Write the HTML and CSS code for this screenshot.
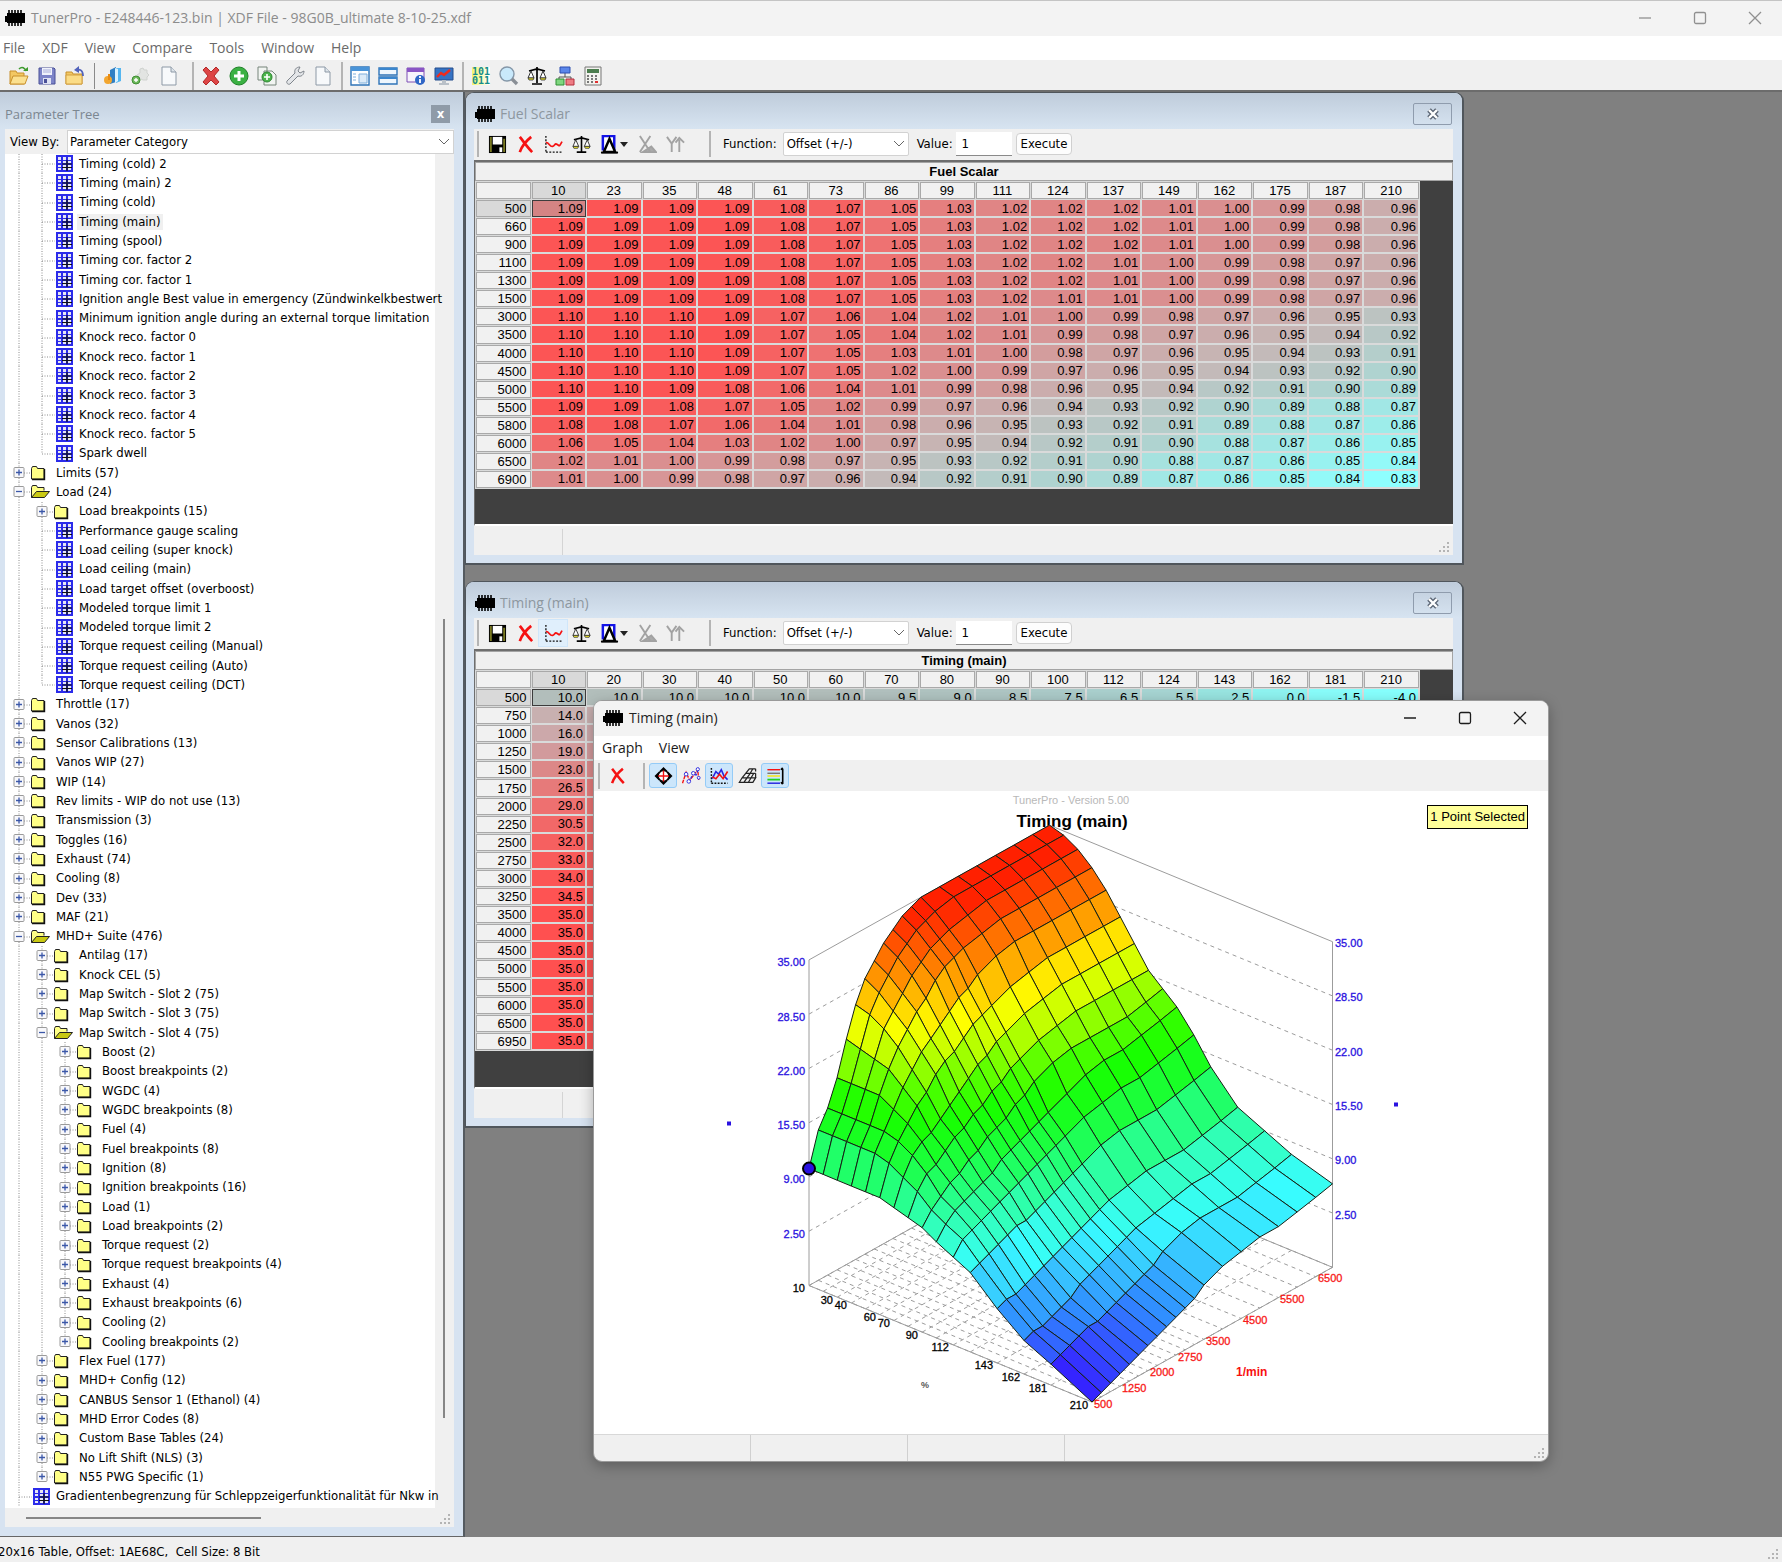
FILE: index.html
```html
<!DOCTYPE html>
<html lang="en">
<head>
<meta charset="utf-8">
<title>TunerPro</title>
<link rel="stylesheet" href="styles.css">
</head>
<body>
<svg class="defs" aria-hidden="true">
  <symbol id="chip" viewBox="0 0 20 16"><path d="M2 3h18v10H2zM0 6h2v6H0z" fill="#000"/><path d="M4 0v3M7 0v3M10 0v3M13 0v3M16 0v3M4 13v3M7 13v3M10 13v3M13 13v3M16 13v3" stroke="#000" stroke-width="1.6"/></symbol>
  <symbol id="open" viewBox="0 0 20 20"><path d="M1 18V5h6l1 2h7v11z" fill="#f3c863" stroke="#c8902c"/><path d="M1 18l3-8h15l-3 8z" fill="#fbe08f" stroke="#c8902c"/><path d="M10 3c3-3 6-1 7 2" fill="none" stroke="#3c9a2c" stroke-width="1.6"/><path d="M14 5h5V1z" fill="#3c9a2c"/></symbol>
  <symbol id="save" viewBox="0 0 20 20"><path d="M2 2h15l1 1v15H2z" fill="#7d84c8" stroke="#4a5097"/><path d="M5 2h10v7H5z" fill="#f0f2fb"/><path d="M6 4h8M6 6h8" stroke="#a9aed8"/><path d="M6 12h8v6H6z" fill="#dfe2f2"/><path d="M7 13h3v4H7z" fill="#4a5097"/></symbol>
  <symbol id="openback" viewBox="0 0 20 20"><path d="M1 18V6h6l1 2h9v10z" fill="#f3c863" stroke="#c8902c"/><path d="M1 18V9h16v9z" fill="#fbdc86" stroke="#d3a040"/><path d="M11 4c4-1 7 0 7 6" fill="none" stroke="#5263bb" stroke-width="1.8"/><path d="M9 4l5-4v7z" fill="#5263bb"/></symbol>
  <symbol id="cyl" viewBox="0 0 20 20"><path d="M7 4l6-3v15l-6 2z" fill="#2f7fc4"/><path d="M13 2h5v13l-5 2z" fill="#55b6f0"/><path d="M12 2l3 1v12l-3 2z" fill="#d9f2ff"/><circle cx="5" cy="14" r="4" fill="#f2a630"/><path d="M6 8v6" stroke="#e88a10" stroke-width="2"/></symbol>
  <symbol id="gearadd" viewBox="0 0 20 20"><path d="M9 3l3-1 1 2 3 0 0 3 2 2-2 2 0 3-4 0-4-2-2-3 3-2z" fill="#e2e4e2" stroke="#cfd2cf"/><circle cx="5" cy="14" r="4" fill="#6fb95d" stroke="#3f8f34"/><path d="M5 12v4M3 14h4" stroke="#fff" stroke-width="1.4"/></symbol>
  <symbol id="page" viewBox="0 0 20 20"><path d="M3 1h9l5 5v13H3z" fill="#f7f9fb" stroke="#8d99a6"/><path d="M12 1v5h5" fill="#dde4ea" stroke="#8d99a6"/></symbol>
  <symbol id="cross" viewBox="0 0 20 20"><path d="M2 4l3-3 5 5 5-5 3 3-5 6 5 6-3 3-5-5-5 5-3-3 5-6z" fill="#dd4545" stroke="#b22a2a"/></symbol>
  <symbol id="add" viewBox="0 0 20 20"><circle cx="10" cy="10" r="9" fill="#3bb143" stroke="#1f8128"/><path d="M10 5v10M5 10h10" stroke="#fff" stroke-width="3"/></symbol>
  <symbol id="copyadd" viewBox="0 0 20 20"><path d="M1 1h9v13H1zM7 5h8l4 4v10H7z" fill="#f2f5f2" stroke="#77857a"/><circle cx="10" cy="11" r="5" fill="#4db54c" stroke="#2c8530"/><path d="M10 8v6M7 11h6" stroke="#fff" stroke-width="1.6"/></symbol>
  <symbol id="wrench" viewBox="0 0 20 20"><path d="M2 15l8-8c-1-3 1-6 5-6l-2 4 2 2 4-2c0 4-3 6-6 5l-8 8c-2 1-4-1-3-3z" fill="#e3e5e8" stroke="#7f858c"/></symbol>
  <symbol id="win1" viewBox="0 0 20 20"><path d="M1 1h18v18H1z" fill="#fff" stroke="#2f74b8" stroke-width="1.4"/><path d="M1 1h18v4H1z" fill="#4a94d8"/><path d="M3 8h3M3 11h3M3 14h3M9 8h8v9H9z" fill="#dcebf8" stroke="#7faedb"/></symbol>
  <symbol id="win2" viewBox="0 0 20 20"><path d="M1 2h18v7H1zM1 11h18v7H1z" fill="#eef6fd" stroke="#2f74b8" stroke-width="1.4"/><path d="M1 2h18v2H1zM1 11h18v2H1z" fill="#3a86ce"/></symbol>
  <symbol id="wininfo" viewBox="0 0 20 20"><path d="M1 2h17v14H1z" fill="#f7f3fc" stroke="#7c4fb5"/><path d="M1 2h17v4H1z" fill="#8a55c5"/><circle cx="14" cy="14" r="5" fill="#2f66c6"/><path d="M14 13v4M14 10v2" stroke="#fff" stroke-width="1.8"/></symbol>
  <symbol id="monitor" viewBox="0 0 20 20"><path d="M1 2h18v12H1z" fill="#3673c4" stroke="#274f8c"/><path d="M3 11l4-4 3 2 6-5" fill="none" stroke="#f02a1c" stroke-width="2.4"/><path d="M8 14h4v3h3v2H5v-2h3z" fill="#b9c0c8"/></symbol>
  <symbol id="lens" viewBox="0 0 20 20"><circle cx="8" cy="8" r="7" fill="#c9e9fb" stroke="#8597a8" stroke-width="1.4"/><path d="M13 13l5 5" stroke="#8a8f96" stroke-width="3.4"/></symbol>
  <symbol id="scale" viewBox="0 0 20 20"><path d="M10 1v16M5 18h10M2 5l8-2 8 2" fill="none" stroke="#000" stroke-width="1.7"/><path d="M4 5L1 12h6zM16 5l-3 7h6z" fill="#fff" stroke="#333"/><path d="M1 12h6l-1 2H2zM13 12h6l-1 2h-4z" fill="#f2ea2c" stroke="#333" stroke-width=".8"/></symbol>
  <symbol id="nodes" viewBox="0 0 20 20"><path d="M10 7v4M4 14v-3h12v3" fill="none" stroke="#555"/><path d="M5 1h10v6H5z" fill="#5a86ea" stroke="#2c4fb0"/><path d="M1 13h8v6H1z" fill="#7fd67f" stroke="#2f8f35"/><path d="M11 13h8v6h-8z" fill="#ee7c84" stroke="#b32f3c"/></symbol>
  <symbol id="calc" viewBox="0 0 20 20"><path d="M2 1h16v18H2z" fill="#f2f2ee" stroke="#777"/><path d="M4 3h12v4H4z" fill="#4c7d4e"/><path d="M4 10h2M8 10h2M12 10h2M4 13h2M8 13h2M12 13h2M4 16h2M8 16h2" stroke="#777" stroke-width="1.8"/><path d="M12 16h3" stroke="#e03030" stroke-width="2"/></symbol>
  <symbol id="disk" viewBox="0 0 20 20"><path d="M1 1h18v18H1z" fill="#000"/><path d="M3 2v16M17 4v14" stroke="#7a7a22" stroke-width="2"/><path d="M5 2h10v8H5z" fill="#fff"/><path d="M12 13h3v5h-3z" fill="#fff"/></symbol>
  <symbol id="redx" viewBox="0 0 20 20"><path d="M4 2c4 5 8 11 13 16M16 2C11 6 6 12 4 18" fill="none" stroke="#f51212" stroke-width="2.8"/></symbol>
  <symbol id="curve" viewBox="0 0 20 20"><path d="M2 1v18M2 18h17" stroke="#111" stroke-width="1.4" stroke-dasharray="2 1.6"/><path d="M2 8c3-1 4 5 7 4s2-4 5-2 2 2 5-3" fill="none" stroke="#f51212" stroke-width="1.8"/></symbol>
  <symbol id="delta" viewBox="0 0 20 20"><path d="M3 1h12v14H3z" fill="#fff" stroke="#1414e6" stroke-width="2.6"/><path d="M10 4L4 18h12z" fill="#fff" stroke="#000" stroke-width="2.6"/><path d="M1 18.500h18" stroke="#000" stroke-width="2"/></symbol>
  <symbol id="xaxis" viewBox="0 0 20 20"><path d="M2 1l11 17M13 1L2 18M5 18h14l-5-6z" fill="#aaa" stroke="#a2a2a2" stroke-width="2"/></symbol>
  <symbol id="yaxis" viewBox="0 0 20 20"><path d="M1 2l5 7 5-7M6 9v9M14 5v13M10 8l4-5 5 5" fill="none" stroke="#a2a2a2" stroke-width="2"/></symbol>
  <symbol id="pan" viewBox="0 0 20 20"><path d="M10 0l5 5H5zM10 20l-5-5h10zM0 10l5-5v10zM20 10l-5 5V5z"/><circle cx="10" cy="10" r="6" fill="#fff" stroke="#000" stroke-width="1.6"/><path d="M10 4v12M4 10h12" stroke="#f51212" stroke-width="1.5"/></symbol>
  <symbol id="pts" viewBox="0 0 20 20"><path d="M0 18L4 6l4 9 9-12 1 12" fill="none" stroke="#f51212" stroke-width="1.5" stroke-dasharray="4 1"/><path d="M7 17l5-10 3 2 3-7" fill="none" stroke="#2424e0" stroke-width="1.3" stroke-dasharray="3 1.500"/><g fill="#fff" stroke="#2424e0"><circle cx="4" cy="8" r="2"/><circle cx="7" cy="16" r="2"/><circle cx="12" cy="7" r="2"/><circle cx="17" cy="2.500" r="1.8"/><circle cx="18" cy="12" r="1.6"/></g></symbol>
  <symbol id="twoc" viewBox="0 0 20 20"><path d="M1 1v18M1 18h18" stroke="#111" stroke-width="1.6" stroke-dasharray="2 1.5"/><path d="M2 13l4-8 3 3 3-5 3 7 4 4" fill="none" stroke="#2424e0" stroke-width="1.8"/><path d="M2 11l4 2 4-5 4 5 5-8" fill="none" stroke="#f51212" stroke-width="1.8"/></symbol>
  <symbol id="mesh" viewBox="0 0 20 20"><path d="M1 17h15l3-5H4zM4 12l4-5h11M6 17l7-10M11 17l6-10M8 7l4-5h7M16 2l-3 5M19 2v3M19 7v5" fill="none" stroke="#222" stroke-width="1.4"/></symbol>
  <symbol id="bars" viewBox="0 0 20 20"><path d="M1 3h14" stroke="#f51212" stroke-width="1.6"/><path d="M1 7h14" stroke="#777" stroke-width="1.6"/><path d="M1 10h14" stroke="#f1e63a" stroke-width="2"/><path d="M1 14h14" stroke="#21d321" stroke-width="2"/><path d="M1 18h14" stroke="#2424e0" stroke-width="1.6"/><path d="M18 2v17M16 3l2-2M16 17l2 2" stroke="#000" stroke-width="1.8"/></symbol>
</svg>

<div class="app">
  <header class="titlebar">
    <svg class="chip"><use href="#chip"/></svg>
    <h1 class="caption">TunerPro - E248446-123.bin | XDF File - 98G0B_ultimate 8-10-25.xdf</h1>
    <div class="winbtns dim">
      <button aria-label="Minimize"><svg viewBox="0 0 14 14"><path d="M1 7h12"/></svg></button>
      <button aria-label="Maximize"><svg viewBox="0 0 14 14"><rect x="1.5" y="1.5" width="11" height="11" rx="1.5"/></svg></button>
      <button aria-label="Close"><svg viewBox="0 0 14 14"><path d="M1 1l12 12M13 1L1 13"/></svg></button>
    </div>
  </header>
  <nav class="menu dimtext"><a href="#">File</a><a href="#">XDF</a><a href="#">View</a><a href="#">Compare</a><a href="#">Tools</a><a href="#">Window</a><a href="#">Help</a></nav>
  <div class="toolbar" id="maintools"></div>

  <div class="work">
    <aside class="panel">
      <div class="paneltitle"><h2>Parameter Tree</h2><button class="pclose" aria-label="Close">x</button></div>
      <div class="panelbody">
        <div class="viewby"><label for="vb">View By:</label><select id="vb"><option>Parameter Category</option></select></div>
        <div class="treebox">
          <ul class="tree" id="tree"></ul>
          <div class="vscroll"><i></i></div>
        </div>
        <div class="hscroll"><i></i><svg class="grip"><use href="#gripdots"/></svg></div>
      </div>
    </aside>

    <main class="mdi">
      <section class="win fuel" data-title="Fuel Scalar" data-table="fuel"></section>
      <section class="win timing" data-title="Timing (main)" data-table="timing"></section>

      <section class="graph">
        <div class="gtitle">
          <svg class="chip"><use href="#chip"/></svg><h2>Timing (main)</h2>
          <div class="winbtns">
            <button aria-label="Minimize"><svg viewBox="0 0 14 14"><path d="M1 7h12"/></svg></button>
            <button aria-label="Maximize"><svg viewBox="0 0 14 14"><rect x="1.5" y="1.5" width="11" height="11" rx="1.5"/></svg></button>
            <button aria-label="Close"><svg viewBox="0 0 14 14"><path d="M1 1l12 12M13 1L1 13"/></svg></button>
          </div>
        </div>
        <nav class="menu"><a href="#">Graph</a><a href="#">View</a></nav>
        <div class="gtools">
          <span class="sep"></span><button aria-label="Close graph"><svg><use href="#redx"/></svg></button>
          <span class="sep wide"></span>
          <button class="on" aria-label="Pan"><svg><use href="#pan"/></svg></button>
          <button aria-label="Points"><svg><use href="#pts"/></svg></button>
          <button class="on" aria-label="Curves"><svg><use href="#twoc"/></svg></button>
          <button aria-label="Mesh"><svg><use href="#mesh"/></svg></button>
          <button class="on" aria-label="Legend"><svg><use href="#bars"/></svg></button>
        </div>
        <div class="plot"><svg id="chart" viewBox="0 0 954 642" role="img" aria-label="Timing (main) surface"></svg><span class="note">1 Point Selected</span></div>
        <div class="gstatus"><span></span><span></span><span></span><span></span><svg class="grip"><use href="#gripdots"/></svg></div>
      </section>
    </main>
  </div>
  <footer class="status"><span>20x16 Table, Offset: 1AE68C,&nbsp; Cell Size: 8 Bit</span><svg class="grip"><use href="#gripdots"/></svg></footer>
</div>
<svg class="defs" aria-hidden="true"><symbol id="gripdots" viewBox="0 0 12 12"><path d="M8 0h2v2H8zM8 4h2v2H8zM8 8h2v2H8zM4 4h2v2H4zM4 8h2v2H4zM0 8h2v2H0z" fill="#b4b4b4"/></symbol></svg>
<script src="app.js"></script>
</body>
</html>
```

FILE: styles.css
```css
* { box-sizing: border-box; }
body { margin: 0; font: 13px/16px "DejaVu Sans Condensed", "DejaVu Sans", sans-serif; color: #000; background: #f0f0f0; }
h1, h2 { margin: 0; font-weight: 400; }
button { border: 0; background: none; padding: 0; font: inherit; color: inherit; }
.defs { position: absolute; width: 0; height: 0; }
.app { display: flex; flex-direction: column; height: 100vh; overflow: hidden; }

.titlebar { display: flex; align-items: center; height: 36px; padding: 0 0 2px 5px; background: #f3f3f3; border-top: 1px solid #c4c4c4; flex: none; }
.chip { width: 20px; height: 16px; flex: none; }
.caption, .gtitle h2, .wtitle h2 { font: 14px/18px "Open Sans", sans-serif; }
.paneltitle h2 { font: 13px/18px "Open Sans", sans-serif; }
.caption { color: #8c8c8c; margin-left: 6px; }
.winbtns { margin-left: auto; display: flex; }
.winbtns button { width: 55px; height: 30px; display: flex; align-items: center; justify-content: center; }
.winbtns svg { width: 14px; height: 14px; fill: none; stroke: #1c1c1c; stroke-width: 1.3; }
.winbtns.dim svg { stroke: #909090; }
.menu { display: flex; align-items: center; height: 22px; background: #fff; font: 14px/20px "Open Sans", sans-serif; flex: none; }
.menu a { color: #1a1a1a; text-decoration: none; }
.dimtext { padding-left: 3px; gap: 17px; height: 24px; }
.dimtext a { color: #6a6a6a; }
.toolbar { display: flex; align-items: center; height: 32px; padding-top: 2px; background: #f0f0f0; border-bottom: 2px solid #6c6c6c; flex: none; }
.toolbar button { width: 28px; height: 28px; display: flex; align-items: center; justify-content: center; }
.toolbar svg { width: 20px; height: 20px; }
.toolbar .lead { width: 5px; }
.toolbar .line { width: 1px; height: 26px; margin: 0 4px 0 5px; background: #8a8a8a; }
.toolbar .bar { width: 2px; height: 28px; margin: 0 3px 0 4px; background: #b4b4b4; }
.toolbar .gap { margin-left: 9px; }
.bits { font: bold 10px/9px "DejaVu Sans Mono", monospace; color: #148c8c; background: linear-gradient(90deg, #f4f46a, #fff); }
.bits b { display: block; }

.work { flex: 1; display: flex; min-height: 0; background: #808080; }
.panel { width: 465px; flex: none; display: flex; flex-direction: column; padding: 0 9px 9px 5px; background: #d7e3f1; border-right: 2px solid #555b61; border-bottom: 1px solid #666; }
.paneltitle { display: flex; align-items: center; height: 37px; margin: 0 -9px 0 -5px; padding: 8px 13px 1px 5px; background: linear-gradient(#bfccdb, #d7e4f1); color: #7c8791; flex: none; }
.pclose { margin-left: auto; width: 19px; height: 18px; background: #8f9ba8; color: #fff; font-weight: 700; line-height: 14px; }
.panelbody { flex: 1; display: flex; flex-direction: column; background: #f0f0f0; min-height: 0; }
.viewby { display: flex; align-items: center; height: 25px; flex: none; padding-left: 5px; }
.viewby label { width: 57px; }
select { appearance: none; border: 1px solid #d2d2d2; font: inherit; color: #000; background: #fff url("data:image/svg+xml,%3Csvg xmlns='http://www.w3.org/2000/svg' width='10' height='6'%3E%3Cpath d='M0 0l5 5 5-5' fill='none' stroke='%23666'/%3E%3C/svg%3E") no-repeat right 4px center; }
.viewby select { flex: 1; height: 24px; padding: 0 2px; }
.treebox { display: flex; flex: 1; min-height: 0; }
.tree { flex: 1; min-width: 0; margin: 0; padding: 0 0 2px; list-style: none; background: #fff; display: flex; flex-direction: column; }
.tree li { flex: 1; display: flex; align-items: center; min-height: 0; white-space: nowrap; }
.tree svg { height: 100%; flex: none; }
.tree .sel { background: #f0f0f0; padding: 0 2px; margin-left: -2px; }
.vscroll { width: 19px; padding: 465px 0 90px 8px; }
.vscroll i { display: block; width: 2px; height: 100%; background: #868686; }
.hscroll { height: 19px; flex: none; display: flex; align-items: center; padding-left: 21px; }
.hscroll i { width: 235px; height: 2px; background: #868686; }
.grip { width: 12px; height: 12px; margin: auto 2px 1px auto; }

.mdi { flex: 1; position: relative; overflow: hidden; }
.win { position: absolute; left: 0; width: 999px; display: flex; flex-direction: column; padding: 0 9px 8px 8px; background: #d7e3f1; border: 1px solid #50565c; border-radius: 9px 9px 0 0; border-width: 1px 2px 2px 1px; }
.fuel { top: 0; height: 473px; }
.timing { top: 489px; height: 547px; }
.wtitle { display: flex; align-items: center; height: 36px; flex: none; margin: 0 -9px 0 -8px; padding: 5px 10px 0 9px; border-radius: 8px 8px 0 0; background: linear-gradient(#bfccdb, #d7e4f1); color: #8d979f; }
.wtitle h2 { margin-left: 5px; }
.wclose { margin-left: auto; width: 39px; height: 22px; border: 1px solid #8f9cad; border-radius: 2px; color: #fff; display: flex; align-items: center; justify-content: center; }
.wclose svg { width: 14px; height: 12px; }
.wtools { display: flex; align-items: center; height: 31px; flex: none; background: #f0f0f0; padding: 0 0 1px 3px; }
.wtools button.ic { width: 28px; height: 26px; display: flex; align-items: center; justify-content: center; }
.wtools button.ic svg { width: 19px; height: 19px; }
.wtools button.on { background: #e0effc; outline: 1px solid #cfe6fa; }
.wtools .sep { width: 2px; height: 26px; margin-right: 4px; background: #b4b4b4; }
.wtools .drop { border: 4px solid transparent; border-top: 5px solid #222; margin: 4px 5px 0 -3px; }
.wtools .far { margin: 0 12px 0 20px; }
.wtools label { white-space: nowrap; }
.wtools select { width: 126px; height: 24px; margin: 0 8px 0 6px; padding: 0 3px; border-radius: 2px; }
.wtools input { width: 56px; height: 24px; margin: 0 4px 0 3px; border: 0; border-bottom: 1px solid #8a8a8a; padding: 0 6px; font: inherit; background: #fff; }
.exec { height: 22px; padding: 0 4px; border: 1px solid #d0d0d0; border-radius: 4px; background: #fdfdfd; }
.sheet { flex: 1; min-height: 0; background: #404040; border-top: 2px solid #6e6e6e; border-left: 1px solid #6e6e6e; border-bottom: 2px solid #fff; font: 13px/16px "Liberation Sans", Arial, sans-serif; overflow: hidden; }
.sname { height: 19px; margin: 0; border: 1px solid #a4a4a4; background: #f0f0f0; text-align: center; font-weight: 700; line-height: 18px; overflow: hidden; }
.grid { width: 945px; table-layout: fixed; border-collapse: separate; border-spacing: 1px; background: #d9dada; }
.fuel .grid { height: 308px; }
.timing .grid { height: 381px; }
.grid th, .grid td { padding: 0 2px; text-align: right; line-height: 15px; font-weight: 400; border: 0 solid #d9dada; border-width: 0 1px 1px 0; }
.grid th { background: #f1f1f1; border: 1px solid #a9a9a9; padding-right: 3px; }
.grid thead th { height: 17px; text-align: center; }
.grid th.cur { background: #d9d9d9; }
.grid td.cur { outline: 1px solid #3c3c3c; outline-offset: -1px; }
.wstatus { height: 29px; flex: none; background: #f0f0f0; display: flex; padding-top: 3px; }
.wstatus span { width: 89px; border-right: 1px solid #d4d4d4; }

.graph { position: absolute; left: 128px; top: 608px; width: 956px; height: 762px; display: flex; flex-direction: column; background: #f0f0f0; border: 1px solid #9a9a9a; border-radius: 9px; overflow: hidden; box-shadow: 0 4px 14px rgba(0, 0, 0, .28); }
.gtitle { display: flex; align-items: center; height: 35px; flex: none; padding: 0 1px 2px 9px; background: #f3f3f3; color: #222; }
.gtitle h2 { margin-left: 6px; }
.graph .menu { padding-left: 8px; gap: 16px; height: 24px; }
.gtools { display: flex; align-items: center; height: 31px; flex: none; padding-left: 4px; background: #f0f0f0; }
.gtools .sep { width: 2px; height: 26px; margin-right: 3px; background: #b4b4b4; }
.gtools .wide { margin: 0 4px 0 12px; }
.gtools button { width: 28px; height: 25px; display: flex; align-items: center; justify-content: center; }
.gtools button.on { background: #cce6fb; border: 1px solid #94cbf7; border-radius: 3px; }
.gtools svg { width: 19px; height: 18px; }
.plot { position: relative; flex: 1; min-height: 0; background: #fff; }
.plot svg { display: block; width: 100%; height: 100%; font: 11px "Liberation Sans", Arial, sans-serif; }
.note { position: absolute; right: 20px; top: 14px; height: 24px; padding: 0 2px; border: 1px solid #000; background: #ffff99; font: 13px/22px "Liberation Sans", Arial, sans-serif; }
.gstatus { display: flex; height: 27px; flex: none; border-top: 1px solid #d8d8d8; }
.gstatus span { width: 157px; border-right: 1px solid #d0d0d0; }
.gstatus span:nth-child(4) { border: 0; }
.status { height: 25px; flex: none; display: flex; align-items: center; padding-top: 4px; background: #f0f0f0; }
.status span { margin-left: -2px; }
```

FILE: app.js
```js
const use = id => `<svg><use href="#${id}"/></svg>`;

/* Main toolbar */
const tools = ['lead', 'open', 'save', 'openback', 'line', 'cyl', 'gearadd', 'page', 'bar gap', 'cross', 'add', 'copyadd', 'wrench', 'page', 'bar', 'win1', 'win2', 'wininfo', 'monitor', 'bar', 'bits', 'lens', 'scale', 'nodes', 'calc'];
document.getElementById('maintools').innerHTML = tools.map(t =>
  ['lead', 'line', 'bar', 'bar gap'].includes(t) ? `<span class="${t}"></span>` :
  t === 'bits' ? '<button aria-label="Hex"><span class="bits"><b>101</b><b>011</b></span></button>' :
  `<button aria-label="${t}">${use(t)}</button>`).join('');

/* Parameter tree: level, kind (t table, f folder, o open folder), text */
const tree = `1t Timing (cold) 2
1t Timing (main) 2
1t Timing (cold)
1t Timing (main)
1t Timing (spool)
1t Timing cor. factor 2
1t Timing cor. factor 1
1t Ignition angle Best value in emergency (Zündwinkelkbestwert
1t Minimum ignition angle during an external torque limitation
1t Knock reco. factor 0
1t Knock reco. factor 1
1t Knock reco. factor 2
1t Knock reco. factor 3
1t Knock reco. factor 4
1t Knock reco. factor 5
1t Spark dwell
0f Limits (57)
0o Load (24)
1f Load breakpoints (15)
1t Performance gauge scaling
1t Load ceiling (super knock)
1t Load ceiling (main)
1t Load target offset (overboost)
1t Modeled torque limit 1
1t Modeled torque limit 2
1t Torque request ceiling (Manual)
1t Torque request ceiling (Auto)
1t Torque request ceiling (DCT)
0f Throttle (17)
0f Vanos (32)
0f Sensor Calibrations (13)
0f Vanos WIP (27)
0f WIP (14)
0f Rev limits - WIP do not use (13)
0f Transmission (3)
0f Toggles (16)
0f Exhaust (74)
0f Cooling (8)
0f Dev (33)
0f MAF (21)
0o MHD+ Suite (476)
1f Antilag (17)
1f Knock CEL (5)
1f Map Switch - Slot 2 (75)
1f Map Switch - Slot 3 (75)
1o Map Switch - Slot 4 (75)
2f Boost (2)
2f Boost breakpoints (2)
2f WGDC (4)
2f WGDC breakpoints (8)
2f Fuel (4)
2f Fuel breakpoints (8)
2f Ignition (8)
2f Ignition breakpoints (16)
2f Load (1)
2f Load breakpoints (2)
2f Torque request (2)
2f Torque request breakpoints (4)
2f Exhaust (4)
2f Exhaust breakpoints (6)
2f Cooling (2)
2f Cooling breakpoints (2)
1f Flex Fuel (177)
1f MHD+ Config (12)
1f CANBUS Sensor 1 (Ethanol) (4)
1f MHD Error Codes (8)
1f Custom Base Tables (24)
1f No Lift Shift (NLS) (3)
1f N55 PWG Specific (1)
0t Gradientenbegrenzung für Schleppzeigerfunktionalität für Nkw in`.split('\n');

function treeIcon(kind, x) {
  if (kind === 't') return `<g transform="translate(${x} 1)"><rect width="17" height="17" fill="#2b2bea"/><path d="M2 2h3v3H2zM7 2h3v3H7zM12 2h3v3h-3zM2 6h3v2H2zM7 6h3v2H7zM12 6h3v2h-3zM2 10h3v2H2zM7 10h3v2H7zM12 10h3v2h-3zM2 13h3v2H2zM7 13h3v2H7zM12 13h3v2h-3z" fill="#e6e6f4"/><path d="M6 9h10M6 12.5h10M11 5v11" stroke="#111" stroke-width="1.2"/></g>`;
  if (kind === 'f') return `<g transform="translate(${x - 2} 3)"><path d="M.5 2.500l1-2h4l1 2h6.500v10.500H.5z" fill="#ffff86" stroke="#222"/><path d="M1 13.500h12.500V3" fill="none" stroke="#111" stroke-width="1.4"/></g>`;
  return `<g transform="translate(${x - 2} 3)"><path d="M.5 12.500v-10l1-2h4l1 2h6.500v3" fill="#ffff86" stroke="#222"/><path d="M.5 12.500l5-6h13l-5 6z" fill="#c9c913" stroke="#222"/></g>`;
}
document.getElementById('tree').innerHTML = tree.map((row, i) => {
  const level = +row[0], kind = row[1], text = row.slice(3);
  let last = true;
  for (let j = i + 1; j < tree.length && +tree[j][0] >= level; j++) if (+tree[j][0] === level) { last = false; break; }
  let lines = '';
  for (let l = 0; l <= level; l++) {
    const x = 14 + 23 * l;
    lines += `M${x} 0V${l === level && last && level ? 10 : 20}`;
  }
  const cx = 14 + 23 * level;
  lines += `M${cx} 10h13`;
  const box = kind === 't' ? '' : `<rect x="${cx - 5}" y="4.500" width="10" height="10" rx="1" fill="#f8f8fb" stroke="#9a9a9a"/><path d="M${cx - 3} 9.500h6${kind === 'f' ? `M${cx} 6.500v6` : ''}" stroke="#3b57a8" stroke-width="1.3"/>`;
  return `<li><svg width="${51 + 23 * level}"><path d="${lines}" stroke="#8c8c8c" stroke-dasharray="1 1.500"/>${box}${treeIcon(kind, cx + 14)}</svg><span${i === 3 ? ' class="sel"' : ''}>${text}</span></li>`;
}).join('');

/* Colour ramps */
function ramp(stops, v) {
  if (v <= stops[0][0]) return stops[0][1];
  for (let i = 1; i < stops.length; i++) {
    const [a, ca] = stops[i - 1], [b, cb] = stops[i];
    if (v <= b) {
      const t = (v - a) / (b - a), p = (c, k) => parseInt(c.substr(1 + 2 * k, 2), 16);
      return `rgb(${[0, 1, 2].map(k => Math.round(p(ca, k) + (p(cb, k) - p(ca, k)) * t)).join()})`;
    }
  }
  return stops[stops.length - 1][1];
}

const nums = s => s.trim().split(/\s+/).map(Number);
const fuel = {
  digits: 2,
  cols: nums('10 23 35 48 61 73 86 99 111 124 137 149 162 175 187 210'),
  rows: nums('500 660 900 1100 1300 1500 3000 3500 4000 4500 5000 5500 5800 6000 6500 6900'),
  ramp: [[.83, '#8effff'], [.85, '#98f2f0'], [.88, '#a6e2df'], [.9, '#afd3d0'], [.92, '#b8c8c6'], [.93, '#bcc3c1'], [.94, '#c3bab9'], [.96, '#cbadad'], [.98, '#d39d9d'], [1, '#da8f90'], [1.02, '#e08585'], [1.05, '#ee7272'], [1.07, '#f66262'], [1.09, '#fc5555']],
  data: `109 109 109 109 108 107 105 103 102 102 102 101 100 99 98 96
109 109 109 109 108 107 105 103 102 102 102 101 100 99 98 96
109 109 109 109 108 107 105 103 102 102 102 101 100 99 98 96
109 109 109 109 108 107 105 103 102 102 101 100 99 98 97 96
109 109 109 109 108 107 105 103 102 102 101 100 99 98 97 96
109 109 109 109 108 107 105 103 102 101 101 100 99 98 97 96
110 110 110 109 107 106 104 102 101 100 99 98 97 96 95 93
110 110 110 109 107 105 104 102 101 99 98 97 96 95 94 92
110 110 110 109 107 105 103 101 100 98 97 96 95 94 93 91
110 110 110 109 107 105 102 100 99 97 96 95 94 93 92 90
110 110 109 108 106 104 101 99 98 96 95 94 92 91 90 89
109 109 108 107 105 102 99 97 96 94 93 92 90 89 88 87
108 108 107 106 104 101 98 96 95 93 92 91 89 88 87 86
106 105 104 103 102 100 97 95 94 92 91 90 88 87 86 85
102 101 100 99 98 97 95 93 92 91 90 88 87 86 85 84
101 100 99 98 97 96 94 92 91 90 89 87 86 85 84 83`.split('\n').map(r => nums(r).map(n => n / 100))
};
const timing = {
  digits: 1,
  cols: nums('10 20 30 40 50 60 70 80 90 100 112 124 143 162 181 210'),
  rows: nums('500 750 1000 1250 1500 1750 2000 2250 2500 2750 3000 3250 3500 4000 4500 5000 5500 6000 6500 6950'),
  ramp: [[-2, '#86fffd'], [2.5, '#98e4e0'], [5.5, '#a6d4d2'], [10, '#b2bebb'], [14, '#c8b0b0'], [16, '#cca8aa'], [19, '#d29a9c'], [23, '#dc8888'], [26.5, '#e67a7a'], [29, '#ee7070'], [32, '#f66060'], [35, '#ff5050']],
  data: `10 10 10 10 10 10 9.5 9 8.5 7.5 6.5 5.5 2.5 0 -1.5 -4
14 14 14 14 14 13.5 12.5 11.5 10 9 8 6 3 .5 -1 -3.5
16 16 16 16 16 15.5 14.5 13 11 10 8.5 6.5 3 .5 -.5 -3
19 19 19 19 18 17 15.5 13.5 12 10.5 9 7 3.5 1 0 -2.5
23 22.5 22 21.5 20 18.5 16 14.5 12.5 11 9.5 7.5 4 1.5 .5 -2
26.5 26 25 23.5 21.5 19.5 17 15.5 13.5 11.5 10 8 4.5 2 .5 -1.5
29 28 26.5 25 23 21 18 16 14 12 10.5 8 5 3 1 -1
30.5 29.5 28 26.5 24 22 19 17 15 13 11 8.5 5.5 3.5 1.5 -.5
32 31 29.5 27.5 25 22.5 20 17.5 15.5 13.5 11.5 9 6 4 2 0
33 32 30.5 29 26 23.5 21 18.5 16 14 12 9.5 6.5 4.5 2.5 .5
34 33 31.5 30 27 24.5 21.5 19 17 14.5 12.5 10 7 5 3 1
34.5 33.5 32 30.5 27.5 25 22.5 20 17.5 15 13 10.5 7.5 5.5 3.5 1.5
35 34 32.5 31 28.5 25.5 23 20.5 18.5 15.5 13.5 11 8 6 4.5 2.5
35 34.5 33 31.5 29.5 26.5 24 21.5 19.5 16.5 14.5 12 8.5 6.5 5.5 3.5
35 34.5 33.5 32 30 27 24.5 22 20 17.5 15 12.5 9 7 6 4
35 34.5 33.5 32 30 27.5 25 22.5 20 18 15.5 12.5 9 7.5 6 4.5
35 34.5 33.5 32 30 27.5 25 22.5 20 18 15.5 12.5 9 7.5 6 4.5
35 34.5 33.5 32 30 27.5 25 22.5 20 18.5 16 13 9.5 8 6.5 5
35 34.5 33.5 32 30 27.5 25 22.5 20.5 19 16.5 13.5 10 8.5 7 5.5
35 34.5 33.5 32 30 27.5 25 22.5 21 19.5 17 14 10.5 9 7.5 6`.split('\n').map(nums)
};
const tables = { fuel, timing };

/* Table editor windows */
document.querySelectorAll('.win').forEach(w => {
  const key = w.dataset.table, t = tables[key], title = w.dataset.title;
  const ic = (id, on) => `<button class="ic${on ? ' on' : ''}" aria-label="${id}">${use(id)}</button>`;
  w.innerHTML = `
  <div class="wtitle"><svg class="chip"><use href="#chip"/></svg><h2>${title}</h2><button class="wclose" aria-label="Close"><svg viewBox="0 0 14 12"><path d="M3 2l8 8M11 2l-8 8" stroke="#5b6675" stroke-width="5"/><path d="M3 2l8 8M11 2l-8 8" stroke="#fff" stroke-width="2.4"/></svg></button></div>
  <div class="wtools"><span class="sep"></span>${ic('disk')}${ic('redx')}${ic('curve', key === 'timing')}${ic('scale')}${ic('delta')}<i class="drop"></i>${ic('xaxis')}${ic('yaxis')}<span class="sep far"></span>
  <label for="fn-${key}">Function:</label><select id="fn-${key}"><option>Offset (+/-)</option></select>
  <label for="val-${key}">Value:</label><input id="val-${key}" value="1"><button class="exec">Execute</button></div>
  <div class="sheet"><p class="sname">${title}</p><table class="grid"><thead><tr><th></th>${t.cols.map((c, i) => `<th${i ? '' : ' class="cur"'}>${c}</th>`).join('')}</tr></thead>
  <tbody>${t.data.map((r, i) => `<tr><th${i ? '' : ' class="cur"'}>${t.rows[i]}</th>${r.map((v, j) => `<td${i || j ? '' : ' class="cur"'} style="background:${i || j || key === 'timing' ? ramp(t.ramp, v) : '#d48484'}">${v.toFixed(t.digits)}</td>`).join('')}</tr>`).join('')}</tbody></table></div>
  <div class="wstatus"><span></span><svg class="grip"><use href="#gripdots"/></svg></div>`;
});

/* Surface chart: oblique projection of load x rpm x timing */
const heat = [[-2.5, '#3524ff'], [-.5, '#335cff'], [1.3, '#3090ff'], [4, '#38c8ff'], [6, '#38fcff'], [8, '#34ffcc'], [10, '#2cffa0'], [12, '#20ff68'], [15, '#18ff20'], [17, '#18ff00'], [20, '#60ff00'], [21.5, '#98ff00'], [24, '#deff00'], [25.2, '#ffff00'], [26.5, '#ffdc00'], [28.7, '#ffa000'], [31, '#ff6c00'], [32.7, '#ff4000'], [34, '#ff2000']];
const project = (load, rpm, z) => {
  const u = (load - 10) / 200, v = (rpm - 500) / 6450;
  return [215 + 283 * u + 240.5 * v, 494 + 116.5 * u - 134.7 * v - 8.35 * (z + 4)];
};
const P = (l, r, z) => project(l, r, z).map(n => n.toFixed(1)).join(' ');
let s = '<text x="477" y="12" text-anchor="middle" fill="#b8b8b8">TunerPro - Version 5.00</text><text x="478" y="35" text-anchor="middle" font-size="17" font-weight="700">Timing (main)</text>';
let dash = '';
timing.cols.forEach(c => dash += `M${P(c, 500, -4)}L${P(c, 6950, -4)}`);
timing.rows.forEach(r => dash += `M${P(10, r, -4)}L${P(210, r, -4)}`);
const ticks = [2.5, 9, 15.5, 22, 28.5];
ticks.forEach(z => dash += `M${P(10, 500, z)}L${P(10, 6950, z)}M${P(210, 6950, z)}L${P(10, 6950, z)}`);
s += `<path d="${dash}" fill="none" stroke="#9c9c9c" stroke-dasharray="4 4"/>`;
s += `<path d="M${P(10, 500, 35)}L${P(10, 500, -4)}L${P(210, 500, -4)}L${P(210, 6950, -4)}L${P(210, 6950, 35)}L${P(10, 6950, 35)}ZM${P(10, 500, -4)}L${P(10, 6950, -4)}L${P(210, 6950, -4)}" fill="none" stroke="#9c9c9c"/>`;
const d = timing.data, R = timing.rows, C = timing.cols;
for (let i = R.length - 2; i >= 0; i--) for (let j = 0; j < C.length - 1; j++) {
  const mean = (d[i][j] + d[i + 1][j] + d[i][j + 1] + d[i + 1][j + 1]) / 4;
  s += `<path d="M${P(C[j], R[i], d[i][j])}L${P(C[j + 1], R[i], d[i][j + 1])}L${P(C[j + 1], R[i + 1], d[i + 1][j + 1])}L${P(C[j], R[i + 1], d[i + 1][j])}Z" fill="${ramp(heat, mean)}" stroke="#142014" stroke-linejoin="round"/>`;
}
const label = (p, dx, dy, t, anchor, fill) => `<text x="${Math.round(p[0] + dx)}" y="${Math.round(p[1] + dy)}" text-anchor="${anchor}" fill="${fill}" stroke="${fill}" stroke-width=".3">${t}</text>`;
[...ticks, 35].forEach(z => {
  s += label(project(10, 500, z), -4, 6, z.toFixed(2), 'end', '#2a12e0') + label(project(210, 6950, z), 2, 5, z.toFixed(2), 'start', '#2a12e0');
});
[10, 30, 40, 60, 70, 90, 112, 143, 162, 181, 210].forEach(l => s += label(project(l, 500, -4), -4, 6, l, 'end', '#000'));
[500, 1250, 2000, 2750, 3500, 4500, 5500, 6500].forEach(r => s += label(project(210, r, -4), 2, 5, r, 'start', '#f81818'));
s += '<text x="642" y="584" fill="#f81010" font-weight="700" font-size="12">1/min</text><text x="327" y="596" fill="#555" font-weight="700" font-size="9">%</text>';
s += '<rect x="133" y="330" width="4" height="4" fill="#2a12e0"/><rect x="800" y="311" width="4" height="4" fill="#2a12e0"/>';
const sel = project(10, 500, 10);
s += `<circle cx="${sel[0]}" cy="${sel[1]}" r="6" fill="#2a12e0" stroke="#000" stroke-width="2"/>`;
document.getElementById('chart').innerHTML = s;
```
